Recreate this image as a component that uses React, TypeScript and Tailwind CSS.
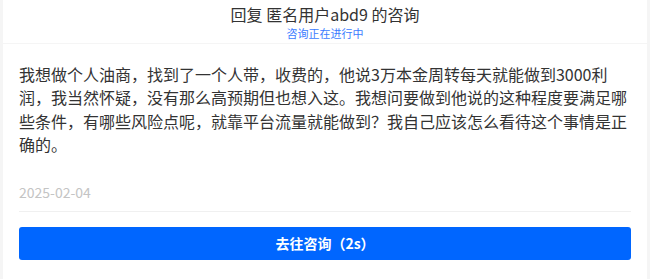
export default function App() {
  return (
    <div
      className="w-[650px] h-[279px] bg-[#f5f5f5] px-[3px] overflow-hidden"
      style={{ fontFamily: '"Noto Sans CJK SC", "Noto Sans", sans-serif' }}
    >
      {/* header */}
      <div className="bg-white h-[43px] flex flex-col items-center pt-[4px]">
        <div className="text-[16px] leading-[20px] text-[#333]">回复 匿名用户abd9 的咨询</div>
        <div className="text-[11px] leading-[14px] text-[#3b7cff] mt-[2px]">咨询正在进行中</div>
      </div>

      {/* card */}
      <div className="bg-white mt-[1px] h-[235px] px-[16px] pt-[19px]">
        <p className="text-[16px] leading-[23.3px] text-[#333]">
          我想做个人油商，找到了一个人带，收费的，他说3万本金周转每天就能做到3000利润，我当然怀疑，没有那么高预期但也想入这。我想问要做到他说的这种程度要满足哪些条件，有哪些风险点呢，就靠平台流量就能做到？我自己应该怎么看待这个事情是正确的。
        </p>
        <div className="mt-[27px] text-[14px] leading-[18px] text-[#c4c4c4]">2025-02-04</div>
        <div className="mt-[10px] h-px bg-[#f0f0f0]" />
        <button className="mt-[15px] w-full h-[33px] rounded-[3px] bg-[#0066ff] text-white text-[14px] font-bold">
          去往咨询（2s）
        </button>
      </div>
    </div>
  );
}
